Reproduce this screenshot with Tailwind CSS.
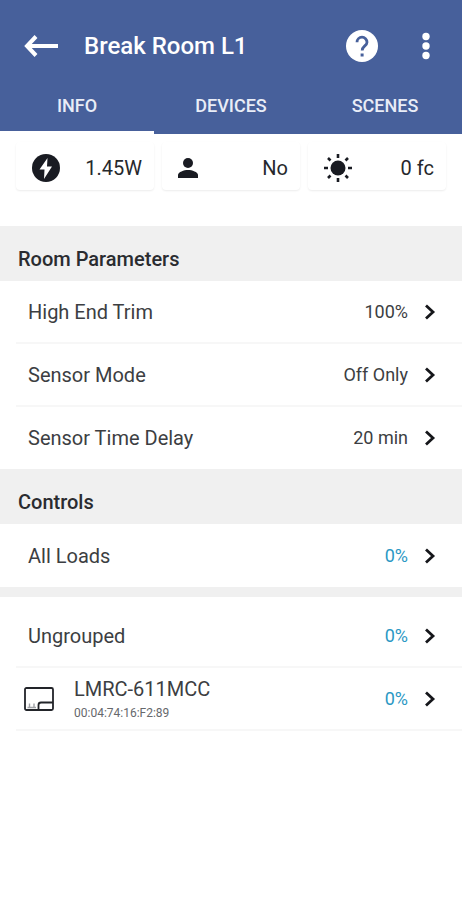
<!DOCTYPE html>
<html lang="en">
<head>
<meta charset="utf-8">
<meta name="viewport" content="width=device-width, initial-scale=1">
<title>Break Room L1</title>
<script src="https://cdn.jsdelivr.net/npm/@tailwindcss/browser@4"></script>
</head>
<body class="min-h-screen bg-white font-['Roboto',sans-serif] text-xl text-[#3c3e42]">
<svg class="hidden" aria-hidden="true">
  <symbol id="chevron" viewBox="0 0 12 16"><path d="M2 1.500l7 6.500-7 6.500" fill="none" stroke="#15161a" stroke-width="2.800"/></symbol>
</svg>
<header class="bg-[#47609b] text-white">
  <div class="flex h-22 items-center pt-1 pl-6 pr-7">
    <button type="button" aria-label="Back" class="mr-6">
      <svg class="h-6 w-9" viewBox="0 0 36 24" fill="none" stroke="#fff" stroke-width="4"><path d="M34 12H4M12 2.500L3 12l9 9.500"/></svg>
    </button>
    <h1 class="flex-1 text-2xl font-medium">Break Room L1</h1>
    <button type="button" aria-label="Help" class="mr-10">
      <svg class="size-8" viewBox="0 0 32 32"><circle cx="16" cy="16" r="16" fill="#fff"/><path d="M11 12.200a5 5 0 0 1 10 0c0 3.600-4.800 3.900-4.800 8.300" fill="none" stroke="#47609b" stroke-width="2.800"/><rect x="14.600" y="23.500" width="3" height="3" fill="#47609b"/></svg>
    </button>
    <button type="button" aria-label="More options">
      <svg class="h-8 w-4" viewBox="0 0 16 32" fill="#fff"><circle cx="8" cy="6.500" r="3.700"/><circle cx="8" cy="16" r="3.700"/><circle cx="8" cy="25.500" r="3.700"/></svg>
    </button>
  </div>
  <nav class="grid h-[46px] grid-cols-3 text-center text-lg font-medium text-[#e9edf7]">
    <a href="#info" aria-current="page" class="border-b-3 border-white pt-1">INFO</a>
    <a href="#devices" class="pt-1">DEVICES</a>
    <a href="#scenes" class="pt-1">SCENES</a>
  </nav>
</header>
<main>
  <section aria-label="Room status" class="grid grid-cols-3 gap-2 px-4 pt-2 pb-9 text-[#26282c]">
    <div class="flex h-12 items-center justify-between rounded-sm pt-1 pr-3 pl-4 shadow-[0_1px_2px_#00000014]">
      <svg class="size-7" viewBox="0 0 28 28"><circle cx="14" cy="14" r="14" fill="#191b22"/><path d="M15.500 4L7.500 15.500h5L12 25l8-12.500h-5z" fill="#fff"/></svg>
      <span>1.45W</span>
    </div>
    <div class="flex h-12 items-center justify-between rounded-sm pt-1 pr-3 pl-4 shadow-[0_1px_2px_#00000014]">
      <svg class="h-6 w-5" viewBox="0 0 20 24" fill="#191b22"><circle cx="10" cy="7" r="5"/><path d="M0 22v-3c0-3 6-5 10-5s10 2 10 5v3z"/></svg>
      <span>No</span>
    </div>
    <div class="flex h-12 items-center justify-between rounded-sm pt-1 pr-3 pl-4 shadow-[0_1px_2px_#00000014]">
      <svg class="size-7" viewBox="0 0 28 28" fill="#191b22"><circle cx="14" cy="14" r="7.500"/><path d="M12.700 0h2.600v4h-2.600zM12.700 24h2.600v4h-2.600zM0 12.700h4v2.600H0zM24 12.700h4v2.600h-4z"/><path d="M4 4l2.500 2.500M21.500 21.500L24 24M24 4l-2.500 2.500M6.500 21.500L4 24" stroke="#191b22" stroke-width="2.600"/></svg>
      <span>0 fc</span>
    </div>
  </section>

  <section>
    <h2 class="bg-[#f0f0f0] px-[18px] pt-[19px] pb-2 leading-7 font-medium text-[#2a2c30]">Room Parameters</h2>
    <ul>
      <li class="ml-4 border-b-2 border-[#f7f7f7]"><button type="button" class="flex h-[61px] w-full items-center gap-4 pr-[26px] pl-3"><span class="flex-1 text-left">High End Trim</span><span class="text-lg">100%</span><svg class="h-4 w-3"><use href="#chevron"/></svg></button></li>
      <li class="ml-4 border-b-2 border-[#f7f7f7]"><button type="button" class="flex h-[61px] w-full items-center gap-4 pr-[26px] pl-3"><span class="flex-1 text-left">Sensor Mode</span><span class="text-lg">Off Only</span><svg class="h-4 w-3"><use href="#chevron"/></svg></button></li>
      <li class="ml-4"><button type="button" class="flex h-[62px] w-full items-center gap-4 pr-[26px] pl-3"><span class="flex-1 text-left">Sensor Time Delay</span><span class="text-lg">20 min</span><svg class="h-4 w-3"><use href="#chevron"/></svg></button></li>
    </ul>
  </section>

  <section>
    <h2 class="bg-[#f0f0f0] px-[18px] pt-[19px] pb-2 leading-7 font-medium text-[#2a2c30]">Controls</h2>
    <button type="button" class="flex h-[63px] w-full items-center gap-4 pr-[26px] pl-7"><span class="flex-1 text-left">All Loads</span><span class="text-lg text-[#2b98c4]">0%</span><svg class="h-4 w-3"><use href="#chevron"/></svg></button>
    <ul class="border-t-10 border-[#f0f0f0] pt-2">
      <li class="ml-4 border-b-2 border-[#f7f7f7]"><button type="button" class="flex h-[61px] w-full items-center gap-4 pr-[26px] pl-3"><span class="flex-1 text-left">Ungrouped</span><span class="text-lg text-[#2b98c4]">0%</span><svg class="h-4 w-3"><use href="#chevron"/></svg></button></li>
      <li class="ml-4 border-b-2 border-[#f7f7f7]"><button type="button" class="flex h-[61px] w-full items-center gap-4 pr-[26px] pl-2">
        <svg class="mr-1 h-6 w-[30px]" viewBox="0 0 30 24" fill="none" stroke="#222429" stroke-width="1.800"><rect x="1" y="1" width="28" height="22" rx="1.500"/><path d="M14.500 23v-5q0-2.500 2.500-2.500H29"/><path d="M5.500 16.500v4M10 16.500v4M3.500 20.500H12" stroke="#a0a2a6" stroke-width="1.400"/></svg>
        <span class="flex flex-1 flex-col text-left"><span class="leading-7">LMRC-611MCC</span><span class="text-xs leading-5 text-[#66686c]">00:04:74:16:F2:89</span></span>
        <span class="text-lg text-[#2b98c4]">0%</span><svg class="h-4 w-3"><use href="#chevron"/></svg></button></li>
    </ul>
  </section>
</main>
</body>
</html>
